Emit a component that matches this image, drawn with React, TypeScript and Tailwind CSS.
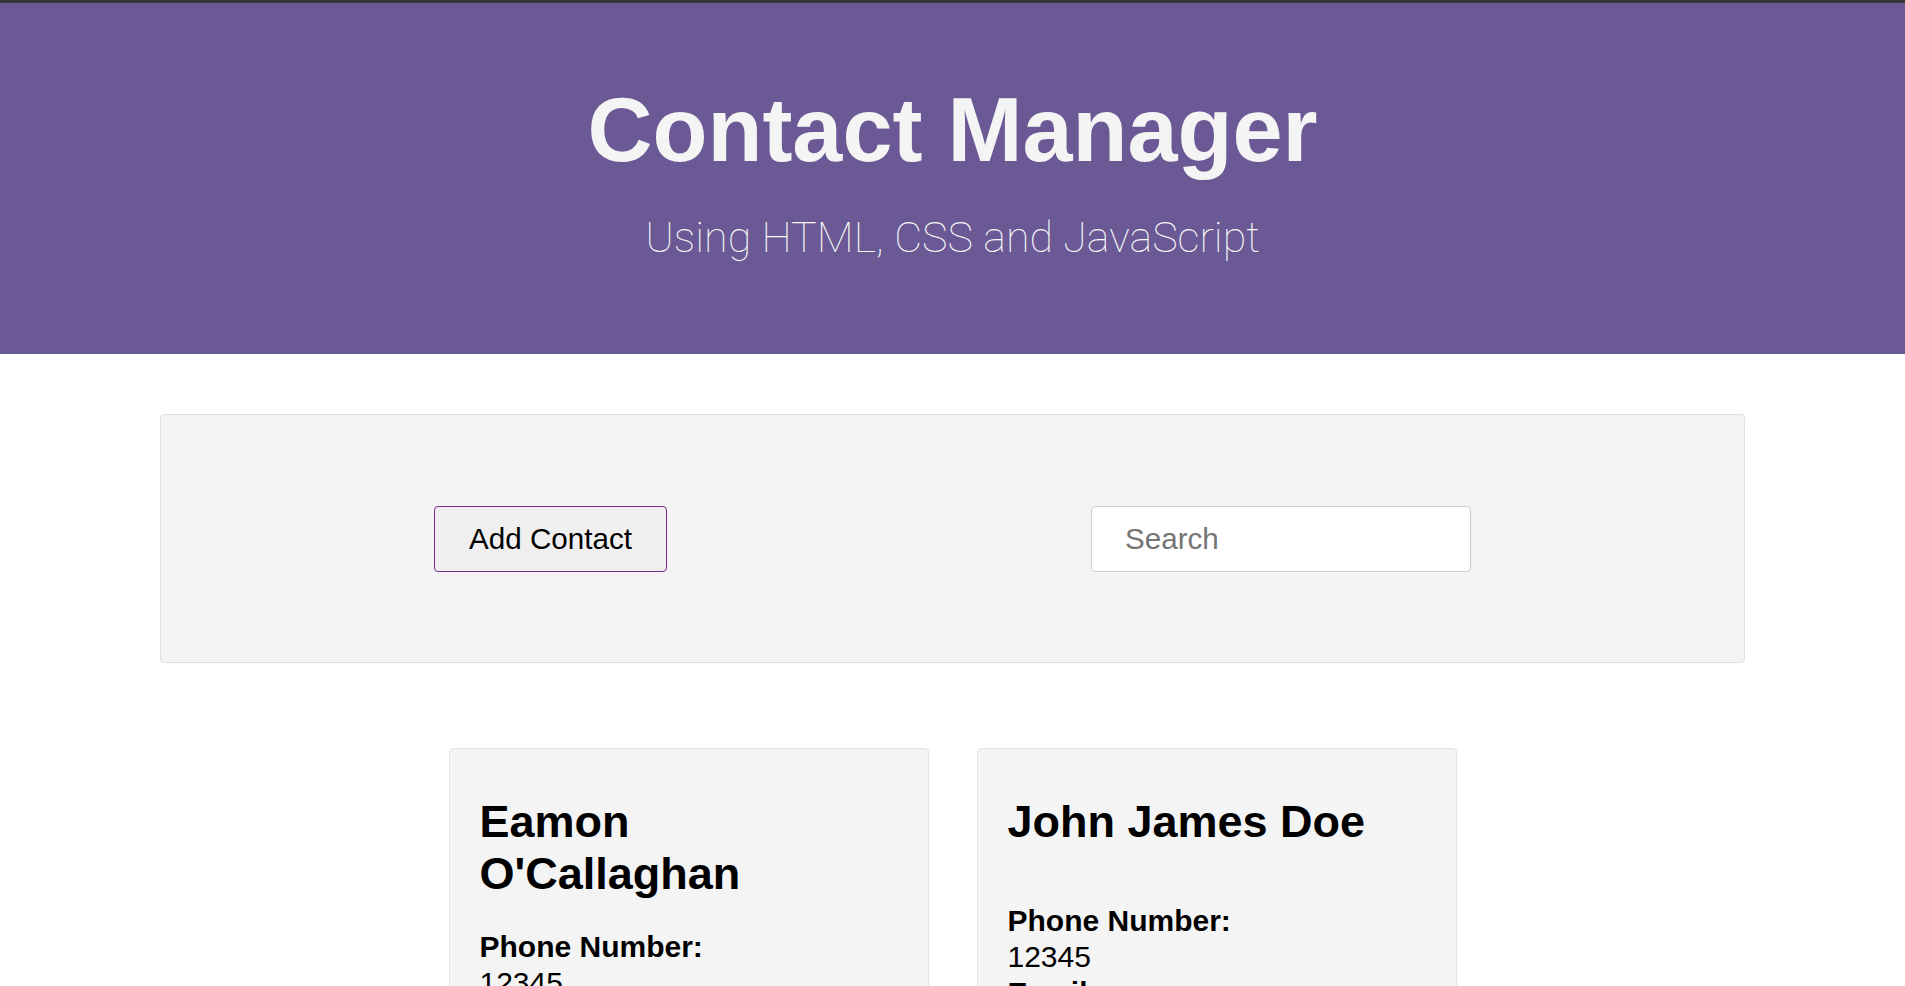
import React from "react";

const sans = { fontFamily: '"Liberation Sans", Arial, Helvetica, sans-serif' };

type Contact = { name: string; phone: string; email: string; address: string; gap: string };

const contacts: Contact[] = [
  { name: "Eamon O'Callaghan", phone: "12345", email: "eamon@example.com", address: "Dublin", gap: "mt-[29px]" },
  { name: "John James Doe", phone: "12345", email: "john@example.com", address: "London", gap: "mt-[55px]" },
];

function Card({ c }: { c: Contact }) {
  return (
    <div className="w-[480px] shrink-0 rounded-[4px] border border-[#e2e2e2] bg-[#f4f4f4] px-[30px] pt-[47px] pb-[40px] text-black">
      <h2 className="text-[45px] font-bold leading-[52px]">{c.name}</h2>
      <div className={`${c.gap} text-[30px] leading-[36px]`}>
        <div className="font-bold">Phone Number:</div>
        <div>{c.phone}</div>
        <div className="font-bold">Email:</div>
        <div>{c.email}</div>
        <div className="font-bold">Address:</div>
        <div>{c.address}</div>
      </div>
    </div>
  );
}

export default function App() {
  return (
    <div className="min-h-screen bg-white" style={sans}>
      <header className="flex h-[354px] flex-col items-center border-t-[3px] border-[#363636] bg-[#6a5994] pt-[72px] text-[#f4f4f4]">
        <h1 className="text-[90px] font-bold leading-[110px]">Contact Manager</h1>
        <p
          className="mt-[26px] text-[43px] font-thin leading-[53px] text-[#f7f7f7]"
          style={{ fontFamily: 'Roboto, "Liberation Sans", sans-serif' }}
        >
          Using HTML, CSS and JavaScript
        </p>
      </header>

      <section className="mx-auto mt-[60px] flex h-[249px] w-[1585px] items-center justify-between rounded-[4px] border border-[#e0e0e0] bg-[#f4f4f4] px-[273px]">
        <button className="h-[66px] w-[233px] rounded-[4px] border border-[#7b2d8e] bg-[#efefef] pt-[2px] text-[29.6px] text-black">
          Add Contact
        </button>
        <input
          type="text"
          placeholder="Search"
          className="h-[66px] w-[380px] rounded-[4px] border border-[#cccccc] bg-white pl-[33px] text-[29.6px] text-black outline-none placeholder:text-[#757575]"
        />
      </section>

      <main className="mt-[85px] flex justify-center gap-[48px] pb-[60px]">
        {contacts.map((c) => (
          <Card key={c.name} c={c} />
        ))}
      </main>
    </div>
  );
}
